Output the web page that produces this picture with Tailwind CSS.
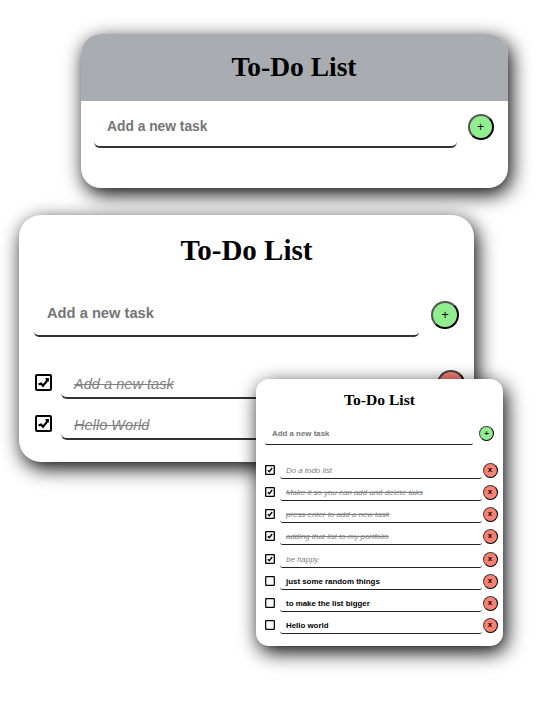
<!DOCTYPE html>
<html lang="en">
<head>
<meta charset="utf-8">
<title>To-Do List</title>
<script src="https://cdn.jsdelivr.net/npm/@tailwindcss/browser@4"></script>
</head>
<body class="relative h-[727px] w-[540px] overflow-hidden bg-white font-['Liberation_Sans',Arial,sans-serif] text-black">
<svg class="hidden">
  <symbol id="check" viewBox="0 0 10 10"><rect x=".7" y=".7" width="8.6" height="8.6" rx=".4" fill="#fff" stroke="#000" stroke-width="1.3"/><path d="M2.8 5.2 4.3 6.7 7.2 3" fill="none" stroke="#000" stroke-width="1.3"/></symbol>
  <symbol id="box" viewBox="0 0 10 10"><rect x=".7" y=".7" width="8.6" height="8.6" rx=".4" fill="#fff" stroke="#000" stroke-width="1.2"/></symbol>
  <symbol id="rough" viewBox="0 0 17 17"><rect x="1" y="1" width="15" height="15" rx="1" fill="#fff" stroke="#000" stroke-width="2"/><path d="M3.5 10.5 6 9.5 8 11.8 9.5 9.8 11 8.3 12.8 4.8" fill="none" stroke="#000" stroke-width="2.1"/><path d="M10.3 4h3.6v3.5h-2.4z"/></symbol>
</svg>

<section class="mt-[34px] ml-[81px] flex h-[154px] w-[427px] flex-col overflow-hidden rounded-[20px] bg-white shadow-[3px_6px_20px_#000]">
  <h1 class="flex h-[67px] items-center justify-center bg-[#a9adb2] pr-px pb-px font-['Liberation_Serif',serif] text-[27.5px] font-bold">To-Do List</h1>
  <div class="flex pt-[4px] pl-[13px]">
    <div class="flex h-[43px] w-[363px] items-center rounded-[6px] border-b-2 border-[#333] pt-[3px] pl-[13px] text-[13.8px] font-bold text-[#757575]">Add a new task</div>
    <button class="mt-[9px] ml-[11px] flex size-[26px] items-center justify-center rounded-full border-2 border-t-[#555] border-r-black border-b-black border-l-[#555] bg-[#90ee90] pr-px text-[12px] leading-none">+</button>
  </div>
</section>

<section class="mt-[27px] ml-[19px] flex h-[247px] w-[455px] flex-col rounded-[22px] bg-white shadow-[3px_6px_20px_#000]">
  <h1 class="flex h-[72px] items-center justify-center font-['Liberation_Serif',serif] text-[29px] font-bold">To-Do List</h1>
  <div class="flex pt-[4px] pl-[15px]">
    <div class="flex h-[46px] w-[385px] items-center rounded-[5px] border-b-2 border-[#333] pl-[13px] text-[14.7px] font-bold text-[#757575]">Add a new task</div>
    <button class="mt-[10px] ml-[12px] flex size-[28px] items-center justify-center rounded-full border-2 border-t-[#555] border-r-black border-b-black border-l-[#555] bg-[#90ee90] pb-px text-[13px] leading-none">+</button>
  </div>
  <ul class="mt-[26px] pl-[16px]">
    <li class="flex h-[41px]">
      <svg class="mt-[11px] size-[17px]"><use href="#rough"/></svg>
      <div class="ml-[9px] flex h-[36px] w-[376px] items-center rounded-[6px] border-b-2 border-[#333] pt-[9px] pl-[13px] text-[14.6px] text-[#808080] italic line-through">Add a new task</div>
      <button class="mt-[7px] size-[28px] rounded-full border-2 border-t-[#444] border-r-black border-b-black border-l-[#444] bg-[#fa8072]"></button>
    </li>
    <li class="flex h-[41px]">
      <svg class="mt-[11px] size-[17px]"><use href="#rough"/></svg>
      <div class="ml-[9px] flex h-[36px] w-[376px] items-center rounded-[6px] border-b-2 border-[#333] pt-[9px] pl-[13px] text-[14.6px] text-[#808080] italic line-through">Hello World</div>
    </li>
  </ul>
</section>

<section class="absolute top-[379px] left-[256px] flex h-[267px] w-[247px] flex-col rounded-[13px] bg-white shadow-[3px_6px_20px_#000]">
  <h1 class="flex h-[41px] items-center justify-center font-['Liberation_Serif',serif] text-[15.6px] font-bold">To-Do List</h1>
  <div class="flex pl-[9px]">
    <div class="flex h-[25px] w-[208px] items-center rounded-[2px] border-b border-[#222] pt-[3px] pl-[7px] text-[7.9px] font-bold text-[#757575]">Add a new task</div>
    <button class="mt-[6px] ml-[6px] flex size-[15px] items-center justify-center rounded-full border border-t-[#444] border-r-black border-b-black border-l-[#444] bg-[#90ee90] text-[8px] leading-none font-bold">+</button>
  </div>
  <ul class="mt-[14px] pl-[9px] text-[7.9px]">
    <li class="flex h-[22.15px]"><svg class="mt-[6px] size-[10px]"><use href="#check"/></svg><div class="ml-[5px] flex h-[20px] w-[202px] items-center rounded-[3px] border-b border-[#222] pt-[5px] pl-[6px] text-[#808080] italic">Do a todo list</div><button class="mt-[4px] ml-[.5px] flex size-[15px] shrink-0 items-center justify-center rounded-full border border-t-[#444] border-r-black border-b-black border-l-[#444] bg-[#fa8072] pb-px leading-none font-bold">x</button></li>
    <li class="flex h-[22.15px]"><svg class="mt-[6px] size-[10px]"><use href="#check"/></svg><div class="ml-[5px] flex h-[20px] w-[202px] items-center rounded-[3px] border-b border-[#222] pt-[5px] pl-[6px] text-[#808080] italic line-through">Make it so you can add and delete taks</div><button class="mt-[4px] ml-[.5px] flex size-[15px] shrink-0 items-center justify-center rounded-full border border-t-[#444] border-r-black border-b-black border-l-[#444] bg-[#fa8072] pb-px leading-none font-bold">x</button></li>
    <li class="flex h-[22.15px]"><svg class="mt-[6px] size-[10px]"><use href="#check"/></svg><div class="ml-[5px] flex h-[20px] w-[202px] items-center rounded-[3px] border-b border-[#222] pt-[5px] pl-[6px] text-[#808080] italic line-through">press enter to add a new task</div><button class="mt-[4px] ml-[.5px] flex size-[15px] shrink-0 items-center justify-center rounded-full border border-t-[#444] border-r-black border-b-black border-l-[#444] bg-[#fa8072] pb-px leading-none font-bold">x</button></li>
    <li class="flex h-[22.15px]"><svg class="mt-[6px] size-[10px]"><use href="#check"/></svg><div class="ml-[5px] flex h-[20px] w-[202px] items-center rounded-[3px] border-b border-[#222] pt-[5px] pl-[6px] text-[#808080] italic line-through">adding that list to my portfolio</div><button class="mt-[4px] ml-[.5px] flex size-[15px] shrink-0 items-center justify-center rounded-full border border-t-[#444] border-r-black border-b-black border-l-[#444] bg-[#fa8072] pb-px leading-none font-bold">x</button></li>
    <li class="flex h-[22.15px]"><svg class="mt-[6px] size-[10px]"><use href="#check"/></svg><div class="ml-[5px] flex h-[20px] w-[202px] items-center rounded-[3px] border-b border-[#222] pt-[5px] pl-[6px] text-[#808080] italic">be happy</div><button class="mt-[4px] ml-[.5px] flex size-[15px] shrink-0 items-center justify-center rounded-full border border-t-[#444] border-r-black border-b-black border-l-[#444] bg-[#fa8072] pb-px leading-none font-bold">x</button></li>
    <li class="flex h-[22.15px]"><svg class="mt-[6px] size-[10px]"><use href="#box"/></svg><div class="ml-[5px] flex h-[20px] w-[202px] items-center rounded-[3px] border-b border-[#222] pt-[5px] pl-[6px] font-bold">just some random things</div><button class="mt-[4px] ml-[.5px] flex size-[15px] shrink-0 items-center justify-center rounded-full border border-t-[#444] border-r-black border-b-black border-l-[#444] bg-[#fa8072] pb-px leading-none font-bold">x</button></li>
    <li class="flex h-[22.15px]"><svg class="mt-[6px] size-[10px]"><use href="#box"/></svg><div class="ml-[5px] flex h-[20px] w-[202px] items-center rounded-[3px] border-b border-[#222] pt-[5px] pl-[6px] font-bold">to make the list bigger</div><button class="mt-[4px] ml-[.5px] flex size-[15px] shrink-0 items-center justify-center rounded-full border border-t-[#444] border-r-black border-b-black border-l-[#444] bg-[#fa8072] pb-px leading-none font-bold">x</button></li>
    <li class="flex h-[22.15px]"><svg class="mt-[6px] size-[10px]"><use href="#box"/></svg><div class="ml-[5px] flex h-[20px] w-[202px] items-center rounded-[3px] border-b border-[#222] pt-[5px] pl-[6px] font-bold">Hello world</div><button class="mt-[4px] ml-[.5px] flex size-[15px] shrink-0 items-center justify-center rounded-full border border-t-[#444] border-r-black border-b-black border-l-[#444] bg-[#fa8072] pb-px leading-none font-bold">x</button></li>
  </ul>
</section>
</body>
</html>
